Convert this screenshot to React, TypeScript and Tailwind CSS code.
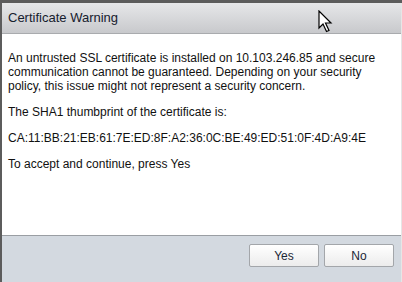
export default function App() {
  return (
    <div className="relative h-[282px] w-[402px] overflow-hidden bg-[#5c5c5c] pl-[2px] pt-[3px] font-['Liberation_Sans',Arial,sans-serif]">
      <div className="flex h-full w-full flex-col border-r border-[#e6e6e6] bg-white">
        {/* Header */}
        <div className="flex h-[31px] shrink-0 items-center border-b border-[#a9abae] bg-gradient-to-b from-[#e6e7e9] to-[#c8c9cc] px-[6px]">
          <span className="text-[13px] text-[#16202e]">Certificate Warning</span>
        </div>

        {/* Body */}
        <div className="flex flex-1 flex-col gap-[12px] px-[6px] pt-[17px] text-[12px] leading-[14px] text-[#111]">
          <p>
            An untrusted SSL certificate is installed on 10.103.246.85 and secure
            communication cannot be guaranteed. Depending on your security
            policy, this issue might not represent a security concern.
          </p>
          <p>The SHA1 thumbprint of the certificate is:</p>
          <p>CA:11:BB:21:EB:61:7E:ED:8F:A2:36:0C:BE:49:ED:51:0F:4D:A9:4E</p>
          <p>To accept and continue, press Yes</p>
        </div>

        {/* Footer */}
        <div className="flex h-[47px] shrink-0 justify-end gap-[5px] border-t border-[#9a9ea3] bg-[#d3d9e0] pr-[7px] pt-[8px]">
          <button className="h-[23px] w-[70px] rounded-[2px] border border-[#a3a6aa] bg-gradient-to-b from-white to-[#ececec] text-[12px] text-[#1b2636]">
            Yes
          </button>
          <button className="h-[23px] w-[70px] rounded-[2px] border border-[#a3a6aa] bg-gradient-to-b from-white to-[#ececec] text-[12px] text-[#1b2636]">
            No
          </button>
        </div>
      </div>

      {/* Mouse cursor */}
      <svg
        className="absolute left-[318px] top-[10px]"
        width="16"
        height="24"
        viewBox="0 0 16 24"
      >
        <path
          d="M1 1 L1 18 L5 14 L8.5 21.5 L11 20.5 L7.5 13 L13 13 Z"
          fill="white"
          stroke="black"
          strokeWidth="1.2"
          strokeLinejoin="miter"
        />
      </svg>
    </div>
  );
}
